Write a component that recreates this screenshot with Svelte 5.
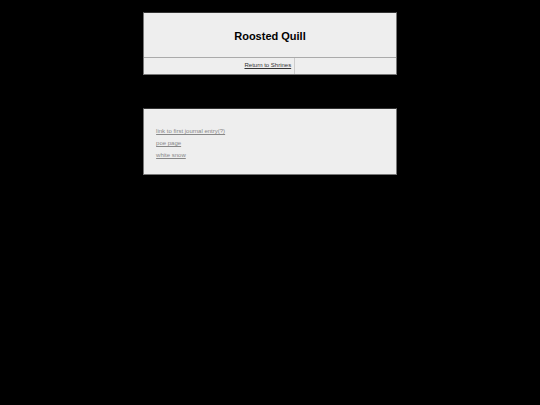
<script>
  const entries = ['link to first journal entry(?)', 'poe page', 'white snow'];
</script>

<div class="page">
  <header class="panel">
    <h1>Roosted Quill</h1>
    <nav>
      <a href="#shrines">Return to Shrines</a>
    </nav>
  </header>

  <main class="panel">
    <ul>
      {#each entries as entry}
        <li><a href="#entry">{entry}</a></li>
      {/each}
    </ul>
  </main>
</div>

<style>
  :global(body) {
    background: #000;
  }

  .page {
    display: flex;
    flex-direction: column;
    gap: 33px;
    width: 47%;
    margin: 0 auto;
    padding: 12px 0;
    color: #000;
    font-family: Arial, 'Liberation Sans', sans-serif;
    font-size: 6px;
    line-height: 12px;
  }

  .panel {
    background: #eee;
    border: 1px solid #777;
    border-top-color: #333;
  }

  h1 {
    margin: 0;
    padding: 17px 0 15px;
    font-size: 11px;
    line-height: 12px;
    text-align: center;
  }

  nav {
    display: flex;
    border-top: 1px solid #aaa;
  }

  nav a {
    flex: 0 0 60%;
    padding: 1px 3px 3px 0;
    box-sizing: border-box;
    border-right: 1px solid #ccc;
    color: #333;
    text-align: right;
  }

  ul {
    margin: 0;
    padding: 16px 12px 13px;
    list-style: none;
  }

  li a {
    color: #888;
  }
</style>
